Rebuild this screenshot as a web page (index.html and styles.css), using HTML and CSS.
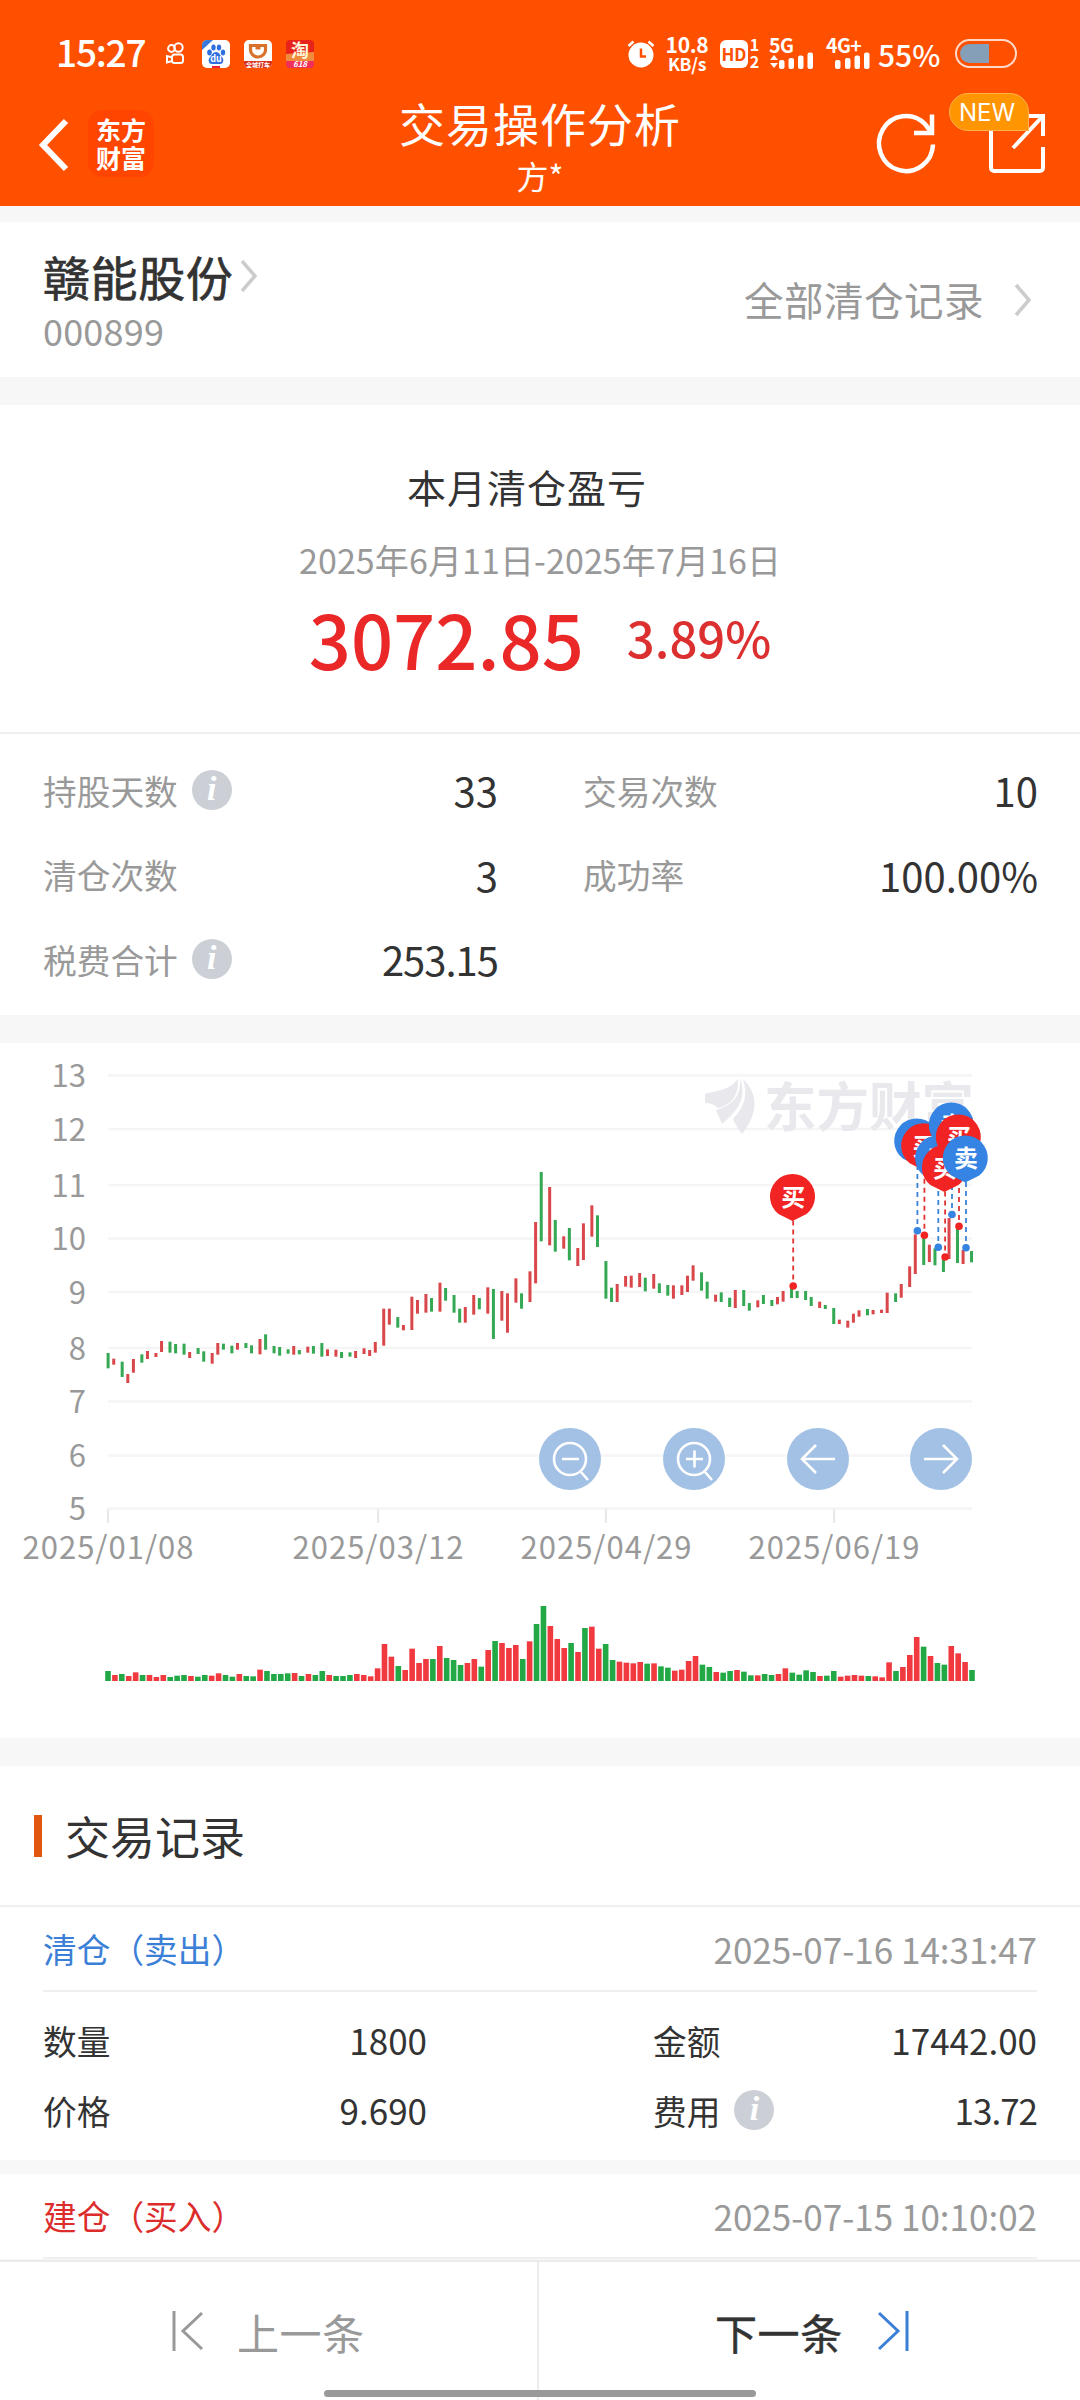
FILE: index.html
```html
<!DOCTYPE html>
<html lang="zh-CN">
<head>
  <meta charset="UTF-8" />
  <meta name="viewport" content="width=device-width, initial-scale=1.0"/>
  <title>交易操作分析</title>
  <link rel="stylesheet" href="styles.css">
</head>
<body>
  <header class="header">
    <div class="status-bar">
      <div class="status-left">
        <span class="clock">15:27</span>
        <svg class="app-kuaishou" width="20" height="24" viewBox="0 0 20 24" fill="none" stroke="#fff" stroke-width="2">
          <circle cx="6.5" cy="6.500" r="3.4"/><circle cx="13.5" cy="5.5" r="4.2"/>
          <rect x="7" y="12.500" width="11" height="8.500" rx="2.5"/><path d="M7 15.500L2 14v6.500L7 19"/>
        </svg>
        <svg class="app-baidu" width="28" height="28" viewBox="0 0 28 28">
          <rect width="28" height="28" rx="5" fill="#fff"/>
          <path d="M0 5a5 5 0 0 1 5-5h6L0 10z" fill="#3a78dc"/>
          <g fill="#2f6fe0"><ellipse cx="7.5" cy="12.5" rx="2.3" ry="3"/><ellipse cx="11.5" cy="7.5" rx="2.2" ry="3"/><ellipse cx="17" cy="7.5" rx="2.2" ry="3"/><ellipse cx="21" cy="12.5" rx="2.2" ry="3"/><path d="M14 12c3 0 4 3 6 5s2 7-2 7H10c-4 0-4-5-2-7s3-5 6-5z"/></g>
          <text x="14" y="22" class="tiny-icon-text" text-anchor="middle">du</text>
          <rect x="10" y="26" width="8" height="2" fill="#e23"/>
        </svg>
        <svg class="app-didi" width="28" height="28" viewBox="0 0 28 28">
          <rect width="28" height="28" rx="5" fill="#fff"/>
          <path d="M0 21h28v2a5 5 0 0 1-5 5H5a5 5 0 0 1-5-5z" fill="#d8301c"/>
          <path d="M6.500 5.500h15v4.500a7.500 7 0 0 1-15 0z" fill="none" stroke="#d9712a" stroke-width="3.200"/>
          <path d="M11.500 7h5v2.500h-5z" fill="#d9712a"/>
          <text x="14" y="26.500" class="micro-icon-text" text-anchor="middle">全城打车</text>
        </svg>
        <svg class="app-taobao" width="28" height="28" viewBox="0 0 28 28">
          <rect width="28" height="28" rx="4" fill="#e8231b"/>
          <path d="M0 14l28-2v9H0z" fill="#f08a3c"/>
          <path d="M0 21h28v3a4 4 0 0 1-4 4H4a4 4 0 0 1-4-4z" fill="#f0305a"/>
          <text x="14" y="17" class="tao-text" text-anchor="middle">淘</text>
          <text x="14" y="27" class="tao-sub" text-anchor="middle">618</text>
        </svg>
      </div>
      <div class="status-right">
        <svg class="alarm" width="28" height="28" viewBox="0 0 28 28">
          <circle cx="14" cy="15" r="12.500" fill="#fff"/>
          <path d="M1.500 6l5-4.500M26.500 6l-5-4.500" stroke="#fff" stroke-width="2.500"/>
          <path d="M14 8.500v8h5" fill="none" stroke="#ff5000" stroke-width="2.500"/>
        </svg>
        <div class="net-speed"><b>10.8</b><span>KB/s</span></div>
        <svg class="hd" width="40" height="30" viewBox="0 0 40 30">
          <rect x="0" y="1" width="28" height="28" rx="6" fill="#fff"/>
          <text x="14" y="21.500" class="hd-text" text-anchor="middle">HD</text>
          <text x="34.500" y="12" class="sim-text" text-anchor="middle">1</text>
          <text x="34.500" y="28.500" class="sim-text" text-anchor="middle">2</text>
        </svg>
        <svg class="signal" width="46" height="32" viewBox="0 0 46 32" fill="#fff">
          <text x="0" y="15" class="sim-text net">5G</text>
          <path d="M1 22l4-5 4 5zM1 25l4 5 4-5z"/>
          <rect x="10" y="22" width="5.500" height="9" rx="2"/><rect x="19.500" y="20" width="5.500" height="11" rx="2"/><rect x="29" y="17.500" width="5.500" height="13.500" rx="2"/><rect x="38.500" y="14.500" width="5.500" height="16.500" rx="2"/>
        </svg>
        <svg class="signal" width="46" height="32" viewBox="0 0 46 32" fill="#fff">
          <text x="0" y="15" class="sim-text net">4G+</text>
          <rect x="9" y="22" width="5.500" height="9" rx="2"/><rect x="19" y="20" width="5.500" height="11" rx="2"/><rect x="28.500" y="17.500" width="5.500" height="13.500" rx="2"/><rect x="38" y="14.500" width="5.500" height="16.500" rx="2"/>
        </svg>
        <span class="percent">55%</span>
        <div class="battery"><i></i></div>
      </div>
    </div>

    <div class="nav-bar">
      <div class="nav-left">
        <svg width="32" height="54" viewBox="0 0 32 54" fill="none" stroke="#fff" stroke-width="6"><path d="M28 3L5 27l23 24"/></svg>
        <div class="brand">东方财富</div>
      </div>
      <div class="nav-title">
        <h1>交易操作分析</h1>
        <p>方*</p>
      </div>
      <div class="nav-right">
        <svg width="60" height="60" viewBox="0 0 60 60" fill="none" stroke="#fff" stroke-width="4.500">
          <path d="M57 31.500A27 27.500 0 1 1 49 11L56 20"/>
          <path d="M56 1.500V20H38"/>
        </svg>
        <div class="share">
          <svg width="58" height="60" viewBox="0 0 58 60" fill="none" stroke="#fff" stroke-width="4">
            <path d="M20 4H6a4 4 0 0 0-3 3V55a3 3 0 0 0 3 3H52a3 3 0 0 0 3-3V34"/>
            <path d="M36 3H55V23M54 4L25 35"/>
          </svg>
          <span class="badge">NEW</span>
        </div>
      </div>
    </div>
  </header>

  <main class="content">
    <section class="stock">
      <div>
        <div class="stock-name">赣能股份
          <svg width="18" height="34" viewBox="0 0 18 34" fill="none" stroke="#ccc" stroke-width="3.500"><path d="M2 2l13 15L2 32"/></svg>
        </div>
        <div class="stock-code">000899</div>
      </div>
      <div class="all-records"><span>全部清仓记录</span>
        <svg width="18" height="34" viewBox="0 0 18 34" fill="none" stroke="#ccc" stroke-width="3.500"><path d="M2 2l13 15L2 32"/></svg>
      </div>
    </section>

    <section class="summary">
      <h2>本月清仓盈亏</h2>
      <p class="period">2025年6月11日-2025年7月16日</p>
      <div class="profit"><strong>3072.85</strong><span>3.89%</span></div>
    </section>

    <section class="stats">
      <div class="stat"><label>持股天数</label><i class="info">i</i><b>33</b></div>
      <div class="stat"><label>交易次数</label><b>10</b></div>
      <div class="stat"><label>清仓次数</label><b>3</b></div>
      <div class="stat"><label>成功率</label><b>100.00%</b></div>
      <div class="stat"><label>税费合计</label><i class="info">i</i><b class="narrow">253.15</b></div>
    </section>

    <section class="chart">
      <svg id="chart" width="1080" height="695" viewBox="0 1043 1080 695">
        <g id="grid"></g>
        <g class="watermark">
          <path d="M705 1094c12-4 24-3 31-13-1 15-12 21-28 22z"/>
          <path d="M705 1094c13-3 25-4 33-15 1 18-8 26-20 29-4-4-8-5-13-5z"/>
          <path d="M716 1110c17-5 25-14 24-31 7 18-1 31-18 45z" />
          <path d="M743 1079c15 14 16 34-1 55-5-7-8-12-9-15 12-13 15-24 10-40z"/>
          <text x="764" y="1127" textLength="210" lengthAdjust="spacingAndGlyphs">东方财富</text>
        </g>
        <g id="candles"></g>
        <g id="volumes"></g>
        <g id="pins"></g>
        <g class="tools">
          <circle cx="570" cy="1459" r="31"/><circle cx="694" cy="1459" r="31"/><circle cx="818" cy="1459" r="31"/><circle cx="941" cy="1459" r="31"/>
        </g>
        <g class="tool-icons">
          <path d="M562 1459h17M581 1472l7 8"/><circle cx="570" cy="1459" r="16"/>
          <path d="M686 1459h17M694.500 1450.500v17M705 1472l7 8"/><circle cx="694" cy="1459" r="16"/>
          <path d="M835 1459H802M816 1445l-14 14 14 14"/>
          <path d="M924 1459h33M943 1445l14 14-14 14"/>
        </g>
      </svg>
    </section>

    <section class="records-title"><h3>交易记录</h3></section>

    <section class="record">
      <div class="record-head"><span class="sell">清仓（卖出）</span><time>2025-07-16 14:31:47</time></div>
      <div class="record-body">
        <div class="cell"><label>数量</label><b>1800</b></div>
        <div class="cell"><label>金额</label><b>17442.00</b></div>
        <div class="cell"><label>价格</label><b>9.690</b></div>
        <div class="cell"><label>费用</label><i class="info">i</i><b class="narrow">13.72</b></div>
      </div>
    </section>

    <section class="record">
      <div class="record-head"><span class="buy">建仓（买入）</span><time>2025-07-15 10:10:02</time></div>
    </section>
  </main>

  <footer class="footer">
    <div class="prev">
      <svg width="32" height="42" viewBox="0 0 32 42" fill="none" stroke="#999" stroke-width="3"><path d="M2 1v40M30 3L11 21l19 18"/></svg>
      上一条
    </div>
    <div class="next">
      下一条
      <svg width="32" height="42" viewBox="0 0 32 42" fill="none" stroke="#3b80d6" stroke-width="3"><path d="M30 1v40M2 3l19 18L2 39"/></svg>
    </div>
    <div class="home-bar"></div>
  </footer>

  <script src="chart.js"></script>
</body>
</html>
```
FILE: styles.css
```css
* {
  box-sizing: border-box;
}
body {
  margin: 0;
  width: 1080px;
  height: 2400px;
  display: flex;
  flex-direction: column;
  overflow: hidden;
  background-color: #f7f7f7;
  color: #333;
  font-family: "Noto Sans CJK SC", sans-serif;
}
h1, h2, h3, p {
  margin: 0;
  font-weight: 400;
}
b, i, strong {
  font-weight: 400;
  font-style: normal;
}
svg {
  display: block;
  flex: none;
  overflow: visible;
}

/* header */
.header {
  height: 206px;
  flex: none;
  background-color: #ff5000;
  color: #fff;
}
.status-bar {
  height: 94px;
  padding: 13px 63px 0 56px;
  display: flex;
  justify-content: space-between;
  align-items: center;
}
.status-left, .status-right {
  display: flex;
  align-items: center;
}
.clock {
  font-size: 37px;
  font-weight: 500;
  line-height: 40px;
  width: 109px;
  margin-top: -6px;
  letter-spacing: -1.2px;
}
.status-left svg {
  margin-right: 14px;
}
.status-left .app-kuaishou {
  margin-right: 17px;
}
.tiny-icon-text {
  font-size: 9px;
  font-weight: 700;
  fill: #fff;
}
.micro-icon-text {
  font-size: 6px;
  font-weight: 700;
  fill: #fff;
}
.tao-text {
  font-size: 18px;
  font-weight: 700;
  fill: #fff3d8;
}
.tao-sub {
  font-size: 8px;
  font-style: italic;
  font-weight: 700;
  fill: #fff;
}
.alarm {
  margin-right: 10px;
}
.net-speed {
  width: 44px;
  margin-right: 11px;
  text-align: center;
  line-height: 19px;
}
.net-speed b, .net-speed span {
  display: block;
  font-size: 21px;
  font-weight: 700;
  letter-spacing: -0.3px;
}
.net-speed span {
  font-size: 17.5px;
}
.hd {
  margin-right: 9px;
}
.hd-text {
  font-size: 17px;
  font-weight: 700;
  fill: #ff5000;
}
.sim-text {
  font-size: 16px;
  font-weight: 700;
  fill: #fff;
}
.sim-text.net {
  font-size: 19.5px;
  letter-spacing: -0.6px;
}
.signal {
  margin-right: 11px;
}
.percent {
  margin-left: -5px;
  width: 77px;
  font-size: 30px;
  font-weight: 500;
  line-height: 32px;
}
.battery {
  width: 62px;
  height: 29px;
  padding: 3px;
  border: 2px solid #ffd9c8;
  border-radius: 15px;
}
.battery i {
  display: block;
  width: 29px;
  height: 100%;
  background-color: #869fb9;
  border-radius: 10px 0 0 10px;
}
.nav-bar {
  height: 112px;
  display: grid;
  grid-template-columns: 300px 1fr 300px;
}
.nav-left {
  padding: 16px 0 0 38px;
  display: flex;
  align-items: flex-start;
  gap: 18px;
}
.nav-left svg {
  margin-top: 8px;
}
.brand {
  width: 66px;
  height: 67px;
  padding: 5px 8px;
  border-radius: 14px;
  background-color: #ff4500;
  font-size: 25px;
  font-weight: 700;
  line-height: 28px;
  word-break: break-all;
}
.nav-title {
  text-align: center;
}
.nav-title h1 {
  font-size: 46px;
  line-height: 56px;
  letter-spacing: 1px;
}
.nav-title p {
  font-size: 32px;
  line-height: 40px;
  margin-top: 5px;
}
.nav-right {
  display: flex;
  padding: 19px 34px 0 0;
  justify-content: flex-end;
  gap: 52px;
}
.share {
  position: relative;
}
.badge {
  position: absolute;
  top: -20px;
  left: -39px;
  width: 80px;
  height: 38px;
  border: 1px solid #ffb250;
  border-radius: 19px 19px 0 19px;
  background-color: #ff9500;
  font-family: Inter, sans-serif;
  font-size: 24px;
  line-height: 37px;
  padding-right: 4px;
  text-align: center;
}

/* content */
.content {
  flex: 1;
  min-height: 0;
  overflow: hidden;
}
.content section {
  background-color: #fff;
}
.stock {
  height: 155px;
  margin-top: 16px;
  padding: 26px 48px 0 43px;
  display: flex;
  justify-content: space-between;
}
.stock-name {
  display: flex;
  align-items: center;
  gap: 7px;
  font-size: 47px;
  line-height: 56px;
  letter-spacing: 0.6px;
  -webkit-text-stroke: 0.7px #333;
}
.stock-code {
  margin-top: 4px;
  font-size: 36px;
  line-height: 44px;
  letter-spacing: 0.2px;
  color: #999;
}
.all-records {
  display: flex;
  align-items: center;
  gap: 30px;
  height: 104px;
  color: #999;
  font-size: 39.500px;
  letter-spacing: 0.5px;
}
.all-records span {
  padding-bottom: 3px;
}
.summary {
  height: 329px;
  margin-top: 28px;
  padding-top: 55px;
  text-align: center;
  border-bottom: 2px solid #f0f0f0;
}
.summary h2 {
  font-size: 39px;
  line-height: 52px;
  letter-spacing: 1px;
  text-indent: -26px;
}
.period {
  margin-top: 27px;
  font-size: 34px;
  line-height: 42px;
  letter-spacing: 0.1px;
  color: #999;
}
.profit {
  margin-top: 12px;
  display: flex;
  justify-content: center;
  align-items: flex-start;
  gap: 43px;
  color: #ea2828;
  font-weight: 500;
}
.profit strong {
  font-size: 74px;
  font-weight: 500;
  line-height: 90px;
}
.profit span {
  font-size: 49px;
  line-height: 88px;
  color: #dc3030;
}
.stats {
  height: 281px;
  padding: 14px 42px 0 43px;
  display: grid;
  grid-template-columns: 455px 455px;
  grid-auto-rows: 84.500px;
  justify-content: space-between;
}
.stat, .cell {
  display: flex;
  align-items: center;
}
.stat label {
  font-size: 33.700px;
  color: #999;
}
.stat b {
  margin-left: auto;
  font-size: 40px;
}
.stat .narrow, .cell .narrow {
  letter-spacing: -1px;
}
.info {
  width: 40px;
  height: 40px;
  margin-left: 14px;
  border-radius: 50%;
  background-color: #ccd0d6;
  color: #fff;
  font-family: "Liberation Serif", serif;
  font-size: 34px;
  font-style: italic;
  font-weight: 700;
  line-height: 38px;
  text-align: center;
}

/* chart */
.chart {
  height: 695px;
  margin-top: 28px;
}
.grid-line {
  stroke: #f5f5f6;
  stroke-width: 2.5;
}
.tick {
  stroke: #e8e8e8;
  stroke-width: 2;
}
.axis-label {
  font-size: 31px;
  fill: #999;
}
.up {
  fill: #d9474b;
}
.down {
  fill: #34a853;
}
.vol.up {
  fill: #f03a40;
}
.vol.down {
  fill: #22a946;
}
.watermark {
  fill: #e8e8ed;
}
.watermark text {
  font-size: 53px;
  font-weight: 700;
}
.pin-buy {
  fill: #f12323;
  stroke: #e03232;
}
.pin-sell {
  fill: #3583e2;
  stroke: #3b82d6;
}
.pin-line {
  stroke-width: 1.8;
  stroke-dasharray: 5 4;
}
.pin-text {
  font-size: 24px;
  font-weight: 700;
  fill: #fff;
}
.tools {
  fill: #98bae2;
  fill-opacity: 0.9;
}
.tool-icons {
  fill: none;
  stroke: #fff;
  stroke-width: 2.6;
}

/* records */
.records-title {
  height: 141px;
  margin-top: 28px;
  padding: 49px 34px 0;
  border-bottom: 2px solid #f0f0f0;
}
.records-title h3 {
  height: 42px;
  padding-left: 23px;
  border-left: 8px solid #e2570f;
  font-size: 45px;
  line-height: 42px;
}
.record {
  padding: 0 43px;
  margin-bottom: 14px;
}
.record-head {
  height: 85px;
  display: flex;
  justify-content: space-between;
  align-items: center;
  border-bottom: 2px solid #efefef;
  font-size: 33.700px;
}
.sell {
  color: #3b80d6;
}
.buy {
  color: #dc2c2c;
}
.record-head time {
  color: #999;
  font-size: 35px;
}
.record-body {
  height: 168px;
  padding-top: 13px;
  display: grid;
  grid-template-columns: 384px 384px;
  grid-auto-rows: 70px;
  justify-content: space-between;
}
.cell label {
  font-size: 33.700px;
}
.cell b {
  margin-left: auto;
  padding-bottom: 2px;
  font-size: 35px;
}

/* bottom bar */
.footer {
  position: relative;
  flex: none;
  display: flex;
  height: 140px;
  border-top: 2px solid #ececec;
  background-color: #fff;
  font-size: 42px;
  letter-spacing: 0.6px;
}
.prev, .next {
  flex: 1;
  display: flex;
  align-items: center;
}
.prev {
  padding-left: 172px;
  gap: 33px;
  color: #999;
  border-right: 2px solid #ececec;
}
.next {
  padding-left: 176px;
  gap: 34px;
  -webkit-text-stroke: 0.5px #333;
}
.home-bar {
  position: absolute;
  left: 324px;
  bottom: 3px;
  width: 432px;
  height: 7px;
  border-radius: 4px;
  background-color: #999;
}
```
FILE: chart.js
```js
const NS = "http://www.w3.org/2000/svg";

function add(parent, tag, attrs, text) {
  const el = document.createElementNS(NS, tag);
  for (const key in attrs) el.setAttribute(key, attrs[key]);
  if (text) el.textContent = text;
  document.getElementById(parent).appendChild(el);
}

// price axis
const lines = [1075.5, 1129, 1185, 1238.5, 1292, 1348, 1401.5, 1455.5, 1508.5];
lines.forEach((y, i) => {
  add("grid", "line", { class: "grid-line", x1: 108, x2: 972, y1: y, y2: y });
  add("grid", "text", { class: "axis-label", x: 86, y: y + 11.5, "text-anchor": "end" }, String(13 - i));
});

// date axis
[["2025/01/08", 108], ["2025/03/12", 378], ["2025/04/29", 606], ["2025/06/19", 834]].forEach(([label, x]) => {
  add("grid", "line", { class: "tick", x1: x, x2: x, y1: 1509, y2: 1523 });
  add("grid", "text", { class: "axis-label", x: x, y: 1559, "text-anchor": "middle", textLength: 171 }, label);
});

// daily high-low range, r = up, g = down, in thirds of a pixel below y 1140
const days = `g639-685 r656-674 g665-711 r702-729 r657-698 g643-668 r633-657 r639-651 r603-636 g605-638
g612-640 g611-644 r636-654 g624-642 g634-665 r639-671 r609-644 g611-629 g617-640 r609-629
g609-624 g616-640 r597-643 g583-629 g618-640 g621-647 g628-641 r618-644 g630-643 r620-638
g618-641 g609-650 r628-648 r629-650 g636-654 g637-650 r633-654 r625-642 r630-648 r606-638
r506-617 r506-554 g531-563 r555-571 r470-570 r480-521 r462-518 g474-515 r428-515 g444-482
g465-518 g506-548 r501-548 r465-524 g474-508 r442-521 g447-597 r453-542 r460-578 r415-488
g460-506 r394-486 r246-430 g96-304 r141-316 g240-335 r289-326 g264-361 r324-378 r250-360
r196-290 g226-321 g363-476 g443-486 r432-486 r408-440 r407-443 r399-441 g413-454 r402-446
g430-459 g435-467 r436-476 r436-465 r407-456 r376-422 g397-452 g425-476 r464-485 g457-486
g473-501 r450-504 g450-498 g489-512 r481-502 g465-492 g480-498 r471-493 r453-485 g445-474
g453-474 g453-480 g471-498 r485-504 g495-507 g504-552 r539-552 r542-563 r521-548 r511-530
g507-526 r510-523 r509-519 r458-519 g460-486 r432-473 r379-441 r283-402 g290-375 r314-366
g325-376 g358-396 r234-357 g265-369 r330-372 g333-367`.split(/\s+/);

days.forEach((day, i) => {
  const [top, bottom] = day.slice(1).split("-").map(Number);
  const x = 108 + Math.round(i * 2.457 - 0.35) * 2.8125;
  add("candles", "rect", {
    class: day[0] === "r" ? "up" : "down",
    x: x - 1.4, y: 1140 + top / 3, width: 3, height: (bottom - top) / 3
  });
});

const volumes = `g30 r18 g21 r15 r26 g18 r18 r12 r18 g12 g16 g18 r15 g13 g18 r16 r23 g18 g13 r21
g15 g14 r34 g30 g21 g21 g23 r24 g15 r21 g18 g30 r18 g15 g15 g18 r21 r18 r14 r38
r111 r73 g45 r33 r97 r54 r66 g66 r105 g69 g63 g48 r54 r66 g43 r93 g120 r114 r99 r108
g66 r119 g171 g225 r165 r126 r99 g114 r87 g159 r163 r97 g111 g63 r58 r55 r53 r57 g52 r53
g44 g40 r31 r34 r60 r75 g49 g42 r27 g25 g30 r33 g28 g17 r17 g21 g18 r21 r38 g25
g19 g32 g27 r15 g16 g30 r13 r16 r18 r16 g15 r14 r11 r56 g30 r42 r78 r132 g103 r75
g54 g49 r105 r83 r57 g33`.split(/\s+/);

volumes.forEach((vol, i) => {
  const h = vol.slice(1) / 3;
  add("volumes", "rect", {
    class: "vol " + (vol[0] === "r" ? "up" : "down"),
    x: 105.2 + i * 6.912, y: 1681 - h, width: 5.6, height: h
  });
});

// trade pins: type, pin x, pin y, price point y
const pins = [
  ["buy", 792.5, 1196.5, 1286],
  ["sell", 916.7, 1141, 1230.7],
  ["buy", 923.7, 1145.7, 1235.3],
  ["sell", 937.6, 1158, 1247.3],
  ["buy", 944.4, 1167.5, 1257],
  ["sell", 951.3, 1125, 1214.5],
  ["buy", 958.3, 1137, 1226.3],
  ["sell", 965.3, 1158, 1247.7]
];

pins.forEach(([type, x, y, dot]) => {
  add("pins", "line", { class: "pin-line pin-" + type, x1: x + 0.7, x2: x + 0.7, y1: y + 24, y2: dot });
  add("pins", "circle", { class: "pin-" + type, "stroke-width": 0, cx: x + 0.7, cy: dot, r: 3.8 });
});
pins.forEach(([type, x, y]) => {
  add("pins", "path", {
    class: "pin-" + type, "stroke-width": 0,
    d: `M${x} ${y + 24.5}L${x - 14} ${y + 17.6}A22.5 22.5 0 1 1 ${x + 14} ${y + 17.6}Z`
  });
  add("pins", "text", { class: "pin-text", x: x + 0.7, y: y + 9, "text-anchor": "middle" }, type === "buy" ? "买" : "卖");
});
```
